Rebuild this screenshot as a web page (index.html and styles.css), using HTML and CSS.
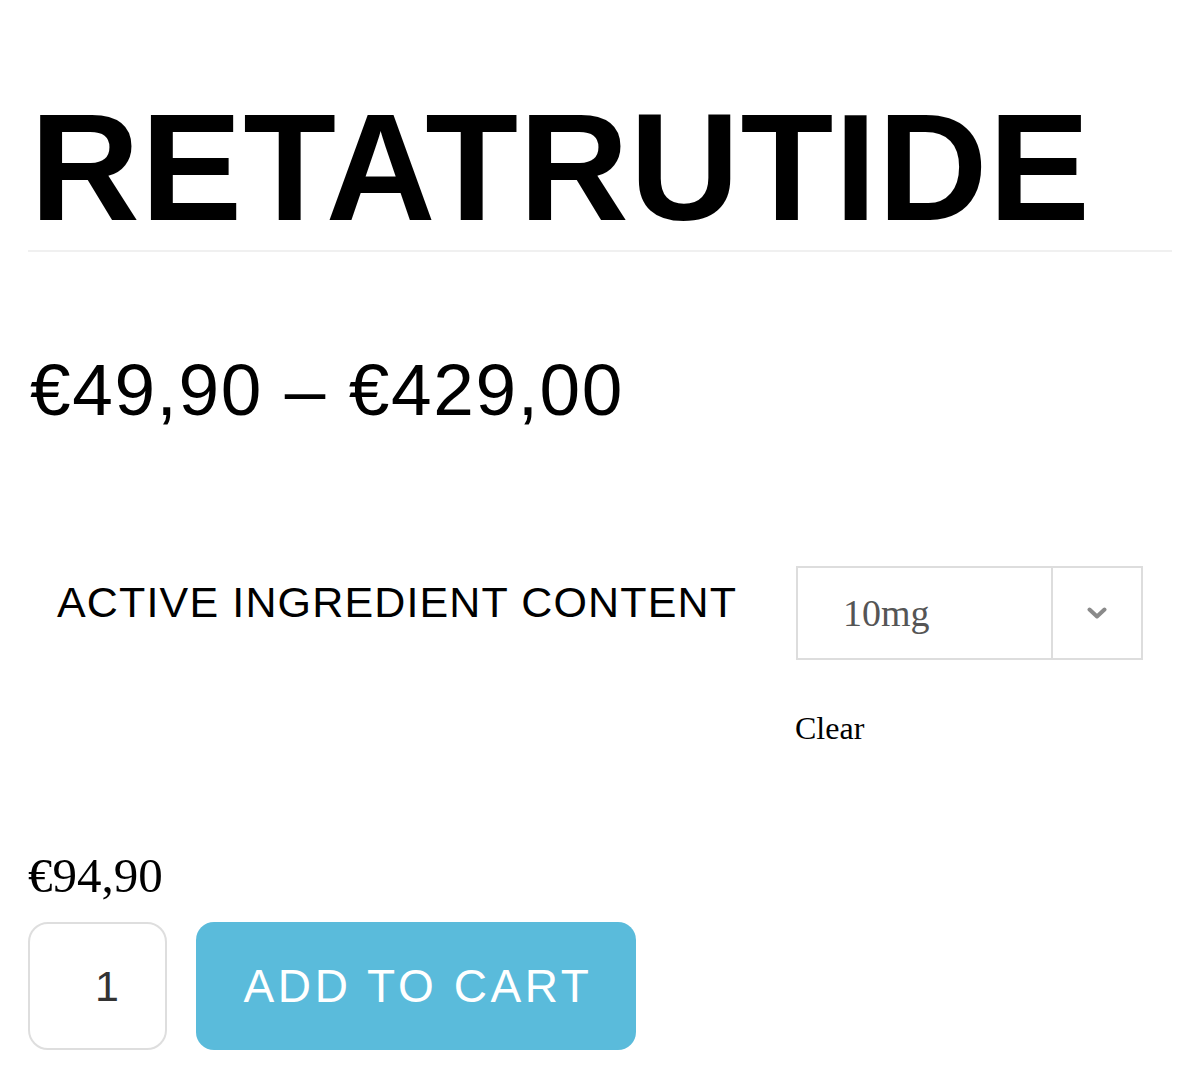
FILE: index.html
```html
<!DOCTYPE html>
<html lang="en">
<head>
<meta charset="utf-8">
<title>Retatrutide</title>
<link rel="stylesheet" href="styles.css">
</head>
<body>
<main class="product">
  <h1 class="product-title">RETATRUTIDE</h1>
  <p class="price-range">€49,90 – €429,00</p>

  <div class="variation">
    <div class="variation-label">ACTIVE INGREDIENT CONTENT</div>
    <div class="variation-value">
      <div class="select">
        <span class="select-text">10mg</span>
        <span class="select-arrow">
          <svg width="20" height="12" viewBox="0 0 20 12"><polyline points="2.5,2.5 10,9.5 17.5,2.5" fill="none" stroke="#8a8a8a" stroke-width="4" stroke-linecap="round" stroke-linejoin="round"/></svg>
        </span>
      </div>
      <a class="clear">Clear</a>
    </div>
  </div>

  <p class="variant-price">€94,90</p>

  <div class="cart-row">
    <div class="qty">1</div>
    <button class="add-btn">ADD TO CART</button>
  </div>
</main>
</body>
</html>
```

FILE: styles.css
```css
html, body {
  margin: 0;
  padding: 0;
  background: #fff;
}

.product {
  padding: 0 28px;
  font-family: "Liberation Sans", Arial, Helvetica, sans-serif;
  color: #000;
}

.product-title {
  margin: 91px 0 0;
  padding-bottom: 7px;
  border-bottom: 2px solid #f0f0f0;
  font-size: 152px;
  line-height: 152px;
  font-weight: 700;
  letter-spacing: 1px;
  padding-left: 2px;
}

.price-range {
  margin: 101px 0 0;
  font-size: 73px;
  line-height: 73px;
  font-weight: 400;
  letter-spacing: 1.6px;
  padding-left: 2px;
}

.variation {
  display: flex;
  align-items: flex-start;
  margin-top: 140px;
}

.variation-label {
  width: 739px;
  padding-left: 29px;
  margin-top: 15px;
  font-size: 43px;
  line-height: 43px;
  letter-spacing: 1.15px;
}

.variation-value {
  display: flex;
  flex-direction: column;
  align-items: flex-start;
}

.select {
  display: flex;
  width: 347px;
  height: 94px;
  box-sizing: border-box;
  border: 2px solid #dddddd;
}

.select-text {
  flex: 1;
  display: flex;
  align-items: center;
  padding-left: 45px;
  font-family: "Liberation Serif", "Times New Roman", serif;
  font-size: 38px;
  color: #555;
}

.select-arrow {
  width: 88px;
  border-left: 2px solid #dddddd;
  display: flex;
  align-items: center;
  justify-content: center;
}

.clear {
  margin-top: 52px;
  margin-left: -1px;
  font-family: "Liberation Serif", "Times New Roman", serif;
  font-size: 32px;
  line-height: 32px;
  color: #000;
}

.variant-price {
  margin: 108px 0 0;
  font-family: "Liberation Serif", "Times New Roman", serif;
  font-size: 49px;
  line-height: 48px;
}

.cart-row {
  display: flex;
  gap: 29px;
  margin-top: 22px;
}

.qty {
  width: 139px;
  height: 128px;
  box-sizing: border-box;
  border: 2px solid #dedede;
  border-radius: 20px;
  display: flex;
  align-items: center;
  padding-left: 65px;
  font-size: 43px;
  color: #333;
}

.add-btn {
  width: 440px;
  height: 128px;
  border: none;
  border-radius: 18px;
  background: #5abbdb;
  color: #fff;
  font-family: "Liberation Sans", Arial, Helvetica, sans-serif;
  font-size: 46px;
  letter-spacing: 3.6px;
  padding: 0 0 0 4px;
}
```
